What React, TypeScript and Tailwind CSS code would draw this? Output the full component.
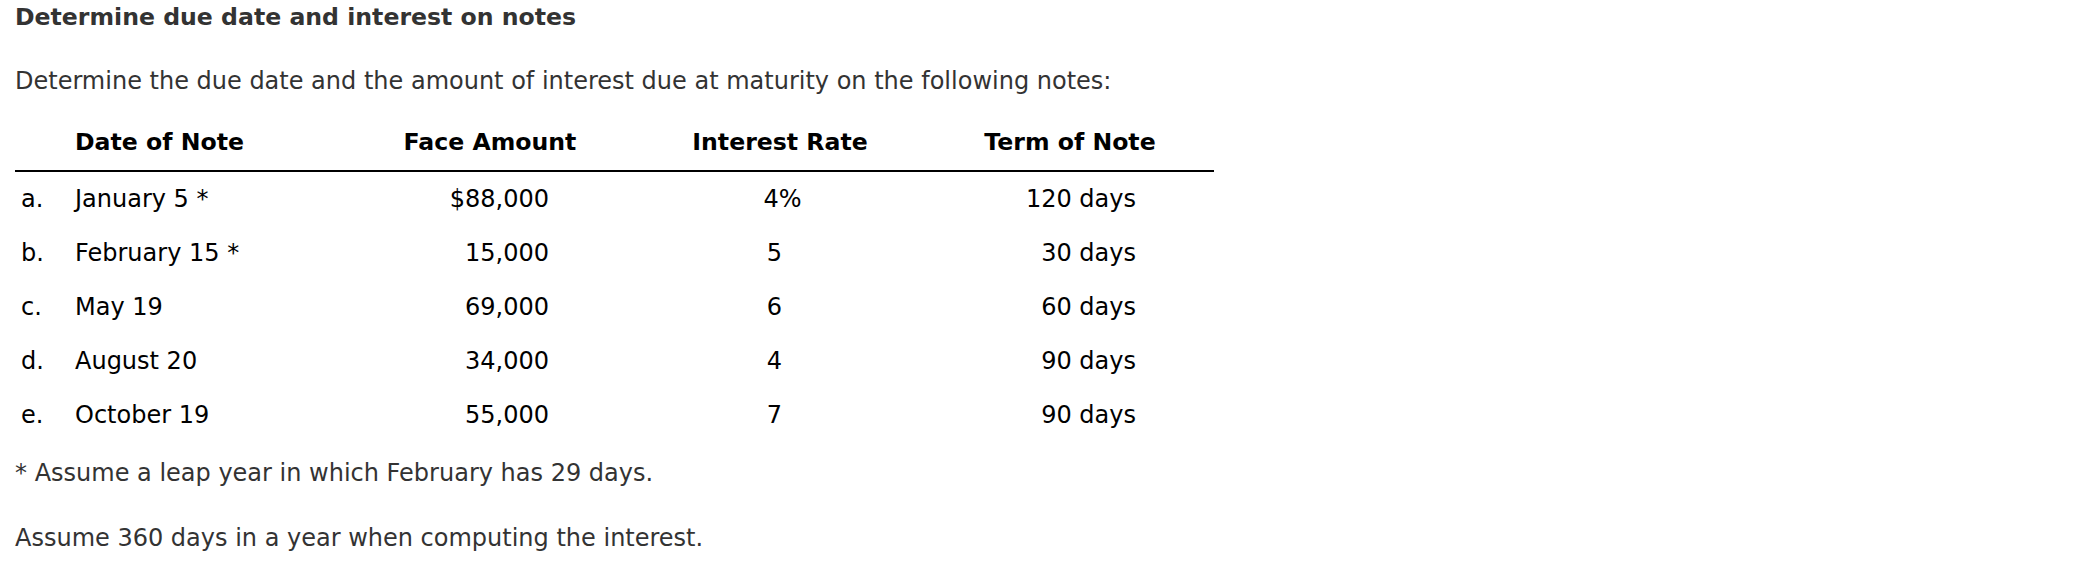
import React from 'react';

interface NoteRow {
  letter: string;
  date: string;
  face: string;
  rate: string;
  term: string;
}

const rows: NoteRow[] = [
  { letter: 'a.', date: 'January 5 *', face: '$88,000', rate: '4%', term: '120 days' },
  { letter: 'b.', date: 'February 15 *', face: '15,000', rate: '5', term: '30 days' },
  { letter: 'c.', date: 'May 19', face: '69,000', rate: '6', term: '60 days' },
  { letter: 'd.', date: 'August 20', face: '34,000', rate: '4', term: '90 days' },
  { letter: 'e.', date: 'October 19', face: '55,000', rate: '7', term: '90 days' },
];

export default function App() {
  return (
    <div className="min-h-screen bg-white font-['DejaVu_Sans',Verdana,sans-serif] text-[24px] text-[#333] pl-[15px] pt-[2px]">
      {/* Title */}
      <h1 className="font-bold text-[23.6px] leading-[30px]">Determine due date and interest on notes</h1>

      <p className="mt-[34px] leading-[30px]">
        Determine the due date and the amount of interest due at maturity on the following notes:
      </p>

      {/* Notes table */}
      <div className="mt-[20px] w-[1199px] text-black">
        <div className="grid grid-cols-[60px_295px_240px_340px_264px] font-bold text-[23.6px] h-[56px] items-center border-b-2 border-black">
          <div></div>
          <div>Date of Note</div>
          <div className="text-center">Face Amount</div>
          <div className="text-center">Interest Rate</div>
          <div className="text-center pr-[24px]">Term of Note</div>
        </div>
        {rows.map((row) => (
          <div key={row.letter} className="grid grid-cols-[60px_295px_240px_340px_264px] h-[54px] items-center">
            <div className="pl-[6px]">{row.letter}</div>
            <div>{row.date}</div>
            <div className="text-right pr-[61px]">{row.face}</div>
            <div className={row.rate.includes('%') ? 'text-center pl-[5px]' : 'text-center pl-[5px] pr-[16px]'}>{row.rate}</div>
            <div className="text-right pr-[78px]">{row.term}</div>
          </div>
        ))}
      </div>

      {/* Footnotes */}
      <p className="mt-[16px] leading-[30px]">* Assume a leap year in which February has 29 days.</p>
      <p className="mt-[35px] leading-[30px]">Assume 360 days in a year when computing the interest.</p>
    </div>
  );
}
